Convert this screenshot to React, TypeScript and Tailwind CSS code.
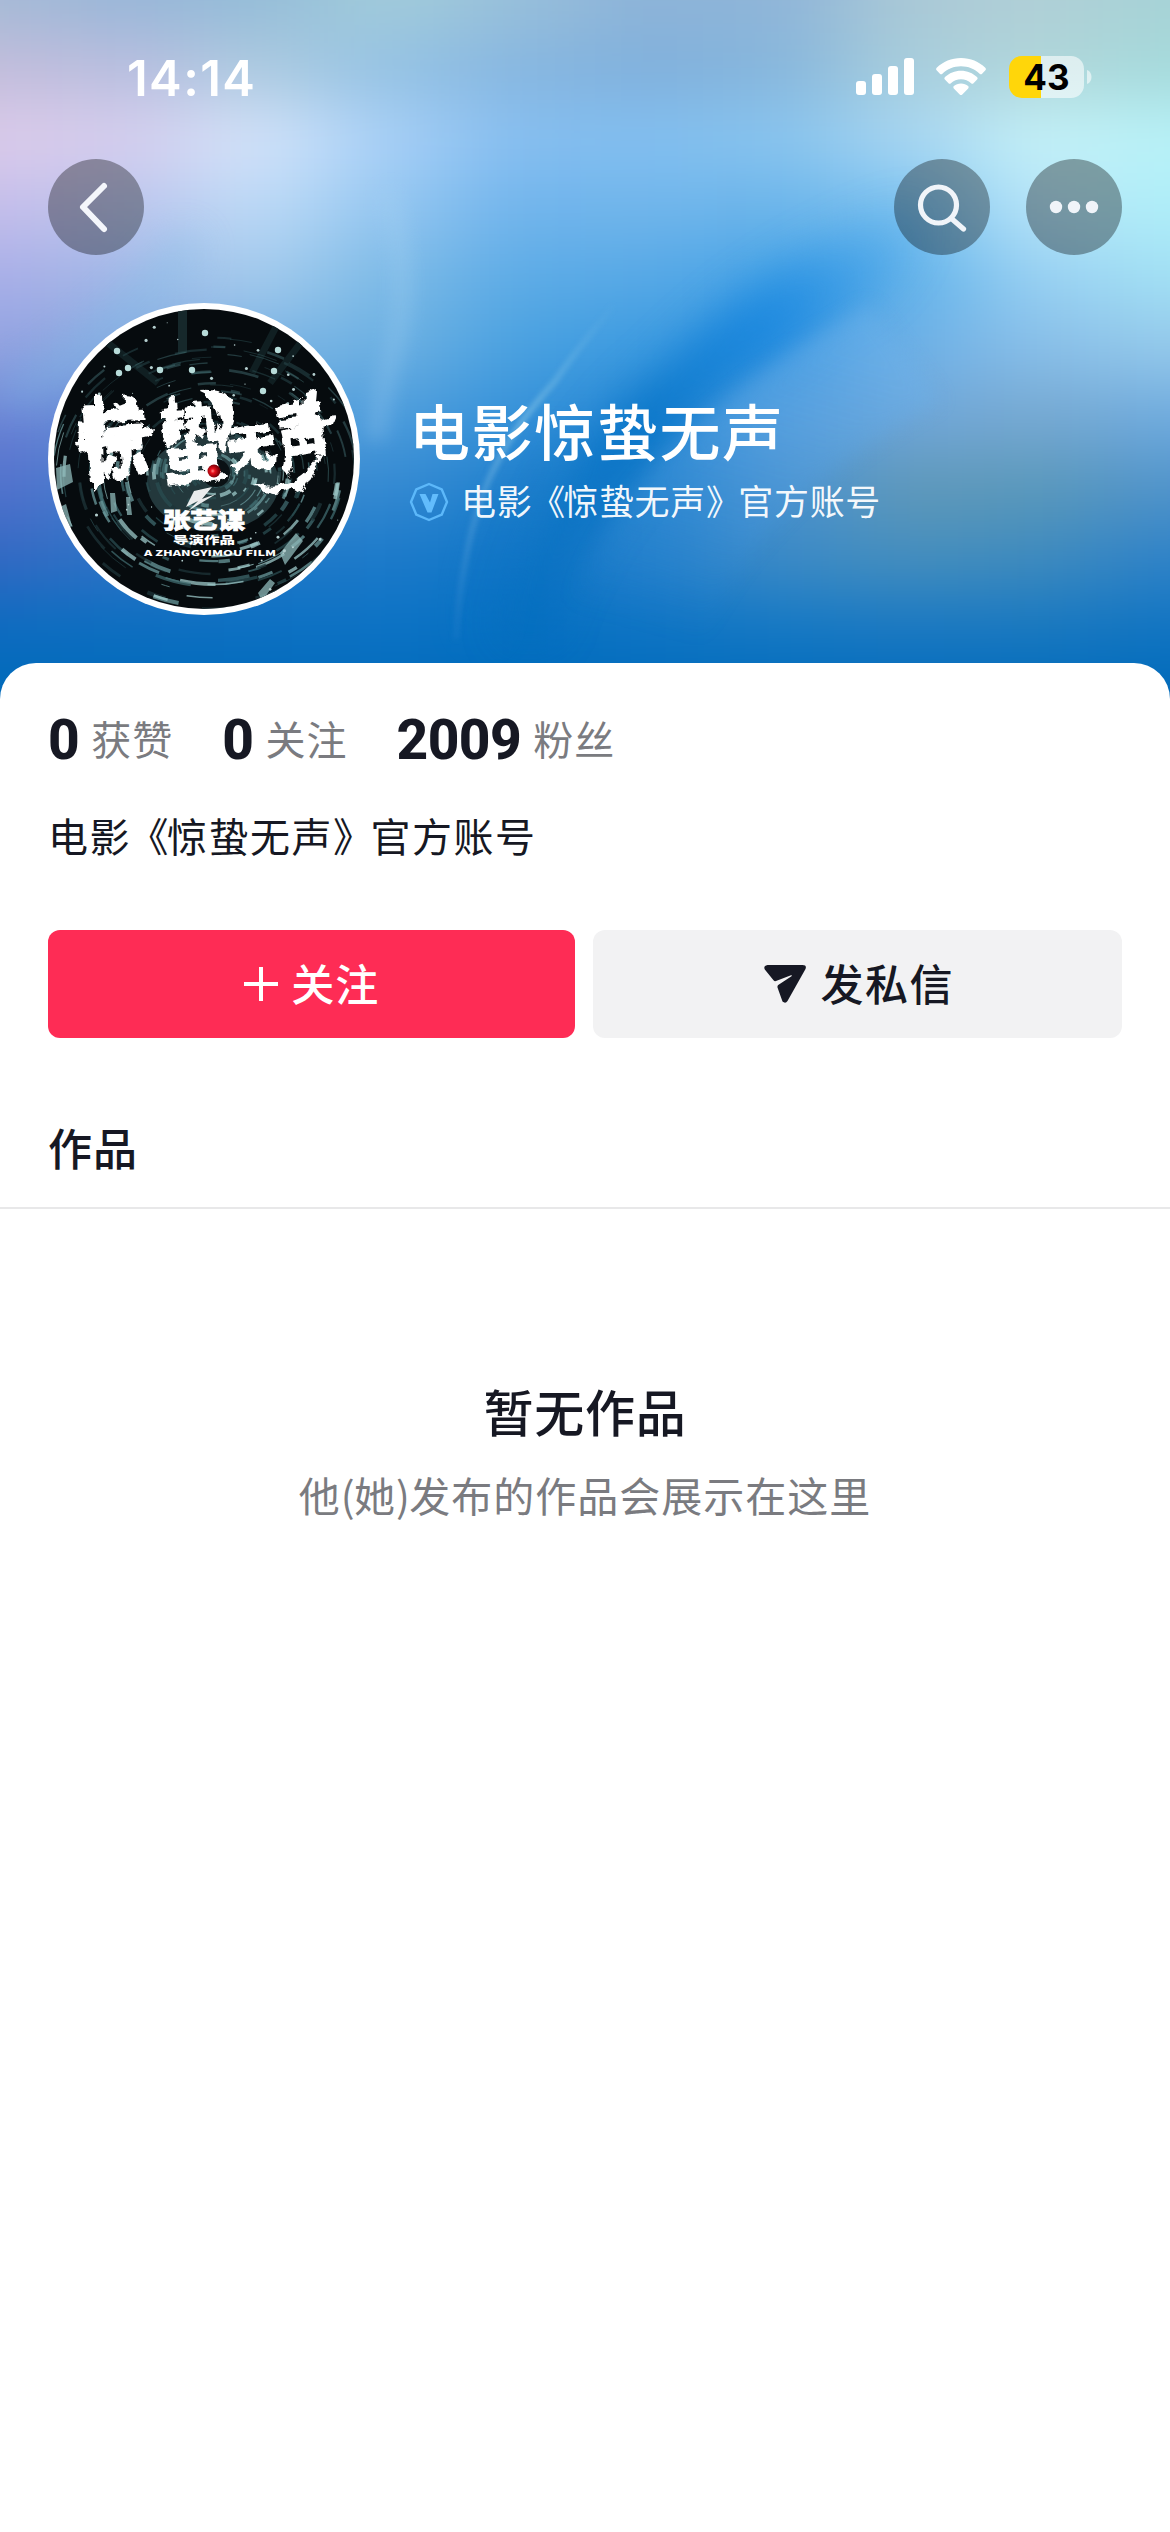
import type { ReactNode } from "react";

const SANS = "font-['Noto_Sans_CJK_SC',sans-serif]";

// cover colours, one row every 70px, one column every 130px
const COVER = [
  ["#a6bad6", "#98b6d8", "#94bcd8", "#a2ccda", "#98bfda", "#8db3d8", "#8fb5d8", "#aac8d6", "#b0cfd6", "#a6d2d6"],
  ["#c3bddb", "#b9bedf", "#adcbe0", "#94c2e4", "#86b6e0", "#80b0dc", "#86b6dc", "#a8cedc", "#b0d6da", "#a5dadb"],
  ["#dccbea", "#d6ceee", "#d4e4fa", "#a8d0f7", "#86bef0", "#82bff0", "#88c4ee", "#a8d6f2", "#c6f2f8", "#b8f2f8"],
  ["#c4bdea", "#bac6ee", "#bcdaf6", "#94c6f0", "#70b4ec", "#70b5eb", "#6ab4ea", "#7cc2f0", "#b8e4f8", "#aeeef8"],
  ["#a8aee8", "#a0b8e6", "#a2caec", "#7cbae6", "#5cabe6", "#56a8e6", "#44a2e6", "#62b2ea", "#98d0f2", "#a2e0f4"],
  ["#92a2e0", "#84a8de", "#7ab2e2", "#6cb0e2", "#48a0e0", "#3a9ae0", "#3494e0", "#6eb0e6", "#88bee8", "#94c8ea"],
  ["#6a80d4", "#6090d8", "#60a4dc", "#4c9cdc", "#3490d8", "#2486d4", "#529cdc", "#70a6d8", "#76a8d0", "#6eaade"],
  ["#5270cc", "#4080cc", "#3c8cd0", "#3489d2", "#2080cc", "#1c7fcc", "#4a92d0", "#6098b8", "#5a98ba", "#5093ca"],
  ["#3268c2", "#2c74c6", "#2078c8", "#1c7aca", "#1076c6", "#2480cc", "#3c8ac6", "#448ebe", "#3e8abe", "#2e82c8"],
  ["#0c6cc0", "#0c6ec0", "#0c70c2", "#0c72c4", "#0470c2", "#0e74c4", "#1478c4", "#1a78c2", "#1878c0", "#1074c2"],
  ["#006ab9", "#006aba", "#006aba", "#006aba", "#006aba", "#006aba", "#006aba", "#006aba", "#006aba", "#006ab9"],
];

function Cover() {
  return (
    <svg className="absolute left-0 top-0" width="1170" height="720" viewBox="0 0 1170 720">
      <defs>
        <filter id="mesh" filterUnits="userSpaceOnUse" x="-200" y="-200" width="1570" height="1120" colorInterpolationFilters="sRGB">
          <feGaussianBlur stdDeviation="50 30" />
        </filter>
        <filter id="soft" filterUnits="userSpaceOnUse" x="-200" y="-200" width="1570" height="1120" colorInterpolationFilters="sRGB">
          <feGaussianBlur stdDeviation="20" />
        </filter>
        <filter id="edge" filterUnits="userSpaceOnUse" x="-200" y="-200" width="1570" height="1120" colorInterpolationFilters="sRGB">
          <feGaussianBlur stdDeviation="9" />
        </filter>
        <filter id="thin" filterUnits="userSpaceOnUse" x="-200" y="-200" width="1570" height="1120" colorInterpolationFilters="sRGB">
          <feGaussianBlur stdDeviation="2.500" />
        </filter>
        <linearGradient id="fold" gradientUnits="userSpaceOnUse" x1="930" y1="190" x2="520" y2="640">
          <stop offset="0" stopColor="#1c8ce4" stopOpacity="0" />
          <stop offset=".18" stopColor="#1c8ce4" stopOpacity=".3" />
          <stop offset=".34" stopColor="#1484de" stopOpacity=".75" />
          <stop offset=".6" stopColor="#0070c4" stopOpacity=".75" />
          <stop offset="1" stopColor="#0068ba" stopOpacity=".3" />
        </linearGradient>
        <linearGradient id="lit" gradientUnits="userSpaceOnUse" x1="780" y1="340" x2="700" y2="640">
          <stop offset="0" stopColor="#6eb2ea" stopOpacity=".4" />
          <stop offset=".6" stopColor="#4a9ae0" stopOpacity=".28" />
          <stop offset="1" stopColor="#2080d0" stopOpacity="0" />
        </linearGradient>
        <linearGradient id="line" gradientUnits="userSpaceOnUse" x1="620" y1="300" x2="456" y2="640">
          <stop offset="0" stopColor="#7cc0e8" stopOpacity="0" />
          <stop offset=".4" stopColor="#84c4e6" stopOpacity=".6" />
          <stop offset="1" stopColor="#5c9cdc" stopOpacity=".1" />
        </linearGradient>
      </defs>
      <g filter="url(#mesh)">
        {COVER.map((row, r) =>
          row.map((color, c) => (
            <rect
              key={`${r}-${c}`}
              x={c === 0 ? -200 : c * 130 - 66}
              y={r === 0 ? -160 : r * 70 - 36}
              width={c === 0 || c === 9 ? 336 : 132}
              height={r === 0 || r === 10 ? 196 : 72}
              fill={color}
            />
          ))
        )}
      </g>
      {/* the fold, then its lit side */}
      <path d="M930 190C820 235 740 290 664 366C600 420 535 500 500 640L550 640C565 575 600 515 655 452C725 385 790 340 860 305C900 285 930 240 930 190Z" fill="url(#fold)" filter="url(#soft)" />
      <path d="M870 305C800 342 740 385 670 448C615 510 575 570 552 650L700 650C730 560 800 480 940 400Z" fill="url(#lit)" filter="url(#edge)" />
      <path d="M614 305C590 335 570 358 556 380C520 420 505 445 489 479C474 515 460 570 456 640" fill="none" stroke="url(#line)" strokeWidth="6" filter="url(#thin)" />
      <path d="M480 640C486 560 510 500 560 440" fill="none" stroke="#0870c4" strokeWidth="26" opacity=".3" filter="url(#soft)" />
      <path d="M388 190C400 240 408 290 396 340C388 370 380 400 376 440" fill="none" stroke="#a8d2f2" strokeWidth="20" opacity=".26" filter="url(#edge)" />
      <path d="M190 240C140 310 70 370 0 400" fill="none" stroke="#7cc0e8" strokeWidth="30" opacity=".4" filter="url(#soft)" />
    </svg>
  );
}

function StatusBar() {
  return (
    <div className="flex h-[159px] items-start justify-between pl-[127px] pr-[78px] pt-[56px]">
      <div className="h-[46px] font-['Inter',sans-serif] text-[49px] font-semibold leading-[45px] tracking-[1.400px] text-white">
        14:14
      </div>
      <div className="flex h-[42px] items-center">
        <svg width="58" height="38" viewBox="0 0 58 38" fill="#fff">
          <rect x="0" y="23" width="10" height="14" rx="3" />
          <rect x="16" y="16" width="10" height="21" rx="3" />
          <rect x="32" y="8" width="10" height="29" rx="3" />
          <rect x="48" y="0" width="10" height="37" rx="3" />
        </svg>
        <svg className="ml-[22px]" width="50" height="38" viewBox="0 0 50 38" fill="#fff">
          <path d="M25 0C34.500 0 43 3.700 49.300 9.700c.8.8.8 1.800.1 2.600l-3.300 3.400c-.7.7-1.700.7-2.500 0C38.700 11 32.200 8.300 25 8.300S11.300 11 6.400 15.700c-.8.7-1.800.7-2.500 0L.6 12.300c-.7-.8-.7-1.800.1-2.600C7 3.700 15.500 0 25 0z" />
          <path d="M25 12.700c6.200 0 11.800 2.400 16 6.300.8.8.8 1.800.1 2.600l-3.600 3.600c-.7.7-1.600.7-2.400 0C32.400 22.700 28.900 21.200 25 21.200s-7.400 1.500-10.100 4c-.8.7-1.700.7-2.400 0l-3.600-3.600c-.7-.8-.7-1.800.1-2.600 4.200-3.900 9.800-6.300 16-6.300z" />
          <path d="M25 25.500c2.800 0 5.300 1 7.100 2.600.7.600.7 1.600.1 2.300L26.300 36.400c-.8.8-1.800.8-2.600 0l-5.900-6c-.6-.7-.6-1.700.1-2.300 1.800-1.600 4.300-2.600 7.100-2.600z" />
        </svg>
        <div className="ml-[23px] flex h-[42px] w-[75px] items-center justify-center rounded-[13px] bg-[linear-gradient(90deg,#ffd60a_0,#ffd60a_32px,rgba(255,255,255,0.58)_32px)] font-['Inter',sans-serif] text-[35px] font-bold leading-none text-black">
          43
        </div>
        <svg className="ml-[3px]" width="5" height="14" viewBox="0 0 5 14">
          <path d="M0 0C3 1 4.500 4 4.500 7S3 13 0 14Z" fill="#fff" opacity=".58" />
        </svg>
      </div>
    </div>
  );
}

function RoundButton({ children }: { children: ReactNode }) {
  return (
    <button className="flex size-24 items-center justify-center rounded-full bg-black/34">
      {children}
    </button>
  );
}

// pseudo random in 0..1, stable between renders
const rand = (n: number) => {
  const v = Math.sin(n * 127.1 + 3.7) * 43758.5453;
  return v - Math.floor(v);
};

const ARC_COLORS = ["#9cc8c8", "#3f6a6d", "#2a4c50", "#6a9a9c", "#1e3438"];

function Avatar() {
  const arcs = Array.from({ length: 420 }, (_, i) => {
    const r = 16 + rand(i) * 150;
    const a = rand(i + 500) * Math.PI * 2;
    const span = (0.06 + rand(i + 900) * 0.22) * (r < 60 ? 2 : 1);
    const cx = 165;
    const cy = 170;
    const x1 = cx + r * Math.cos(a);
    const y1 = cy + r * Math.sin(a) * 0.85;
    const x2 = cx + r * Math.cos(a + span);
    const y2 = cy + r * Math.sin(a + span) * 0.85;
    const low = y1 > 150;
    return {
      d: `M${x1.toFixed(1)} ${y1.toFixed(1)}A${r.toFixed(1)} ${(r * 0.85).toFixed(1)} 0 0 1 ${x2.toFixed(1)} ${y2.toFixed(1)}`,
      color: low ? ARC_COLORS[i % 5] : ARC_COLORS[(i % 2) + 1],
      width: 0.6 + rand(i + 70) * (low ? 3.6 : 2.2),
      opacity: low ? 0.75 : 0.5,
    };
  });

  return (
    <svg className="shrink-0" width="312" height="312" viewBox="0 0 312 312">
      <defs>
        <clipPath id="face">
          <circle cx="156" cy="156" r="150" />
        </clipPath>
        <filter id="brush" x="-10%" y="-10%" width="120%" height="120%">
          <feTurbulence type="fractalNoise" baseFrequency="0.07" numOctaves="4" seed="4" result="n" />
          <feDisplacementMap in="SourceGraphic" in2="n" scale="10" xChannelSelector="R" yChannelSelector="G" />
        </filter>
        <radialGradient id="eye" cx=".4" cy=".5">
          <stop offset="0" stopColor="#ff8c88" />
          <stop offset=".35" stopColor="#e8101c" />
          <stop offset="1" stopColor="#7c0008" />
        </radialGradient>
      </defs>
      <circle cx="156" cy="156" r="156" fill="#fff" />
      <g clipPath="url(#face)">
        <rect width="312" height="312" fill="#060b0e" />
        <rect x="130" y="0" width="9" height="50" fill="#16282b" />
        <path d="M230 20L204 70M260 30L222 80M60 40L110 80" stroke="#101f22" strokeWidth="7" />
        <ellipse cx="165" cy="180" rx="66" ry="48" fill="#40666a" opacity=".5" />
        {arcs.map((arc, i) => (
          <path key={i} d={arc.d} fill="none" stroke={arc.color} strokeWidth={arc.width} opacity={arc.opacity} />
        ))}
        <path d="M8 165l14-4 3 18-16 8zM10 205l8-4 6 22-10 6zM232 250l16-20 7 8-18 24zM210 290l12-14 5 4-13 18zM62 190l5 0 2 18-6 2zM78 194l4 0 2 18-5 0z" fill="#8fb9ba" opacity=".75" />
        <circle cx="168" cy="170" r="14" fill="#0a1114" />
        {Array.from({ length: 75 }, (_, i) => (
          <circle
            key={i}
            cx={rand(i + 41) * 312}
            cy={rand(i + 83) < 0.6 ? rand(i + 7) * 110 : 200 + rand(i + 7) * 110}
            r={0.5 + rand(i + 19) * 1.2}
            fill="#b4cece"
          />
        ))}
        {[[157, 30], [80, 65], [69, 48], [71, 70], [112, 67], [230, 47], [226, 68], [215, 88], [144, 67]].map(([x, y]) => (
          <circle key={x} cx={x} cy={y} r="3.200" fill="#b8dcda" />
        ))}
        <g filter="url(#brush)" fill="#fff" className="font-['Noto_Sans_CJK_SC',sans-serif] font-black">
          <text transform="translate(31 172) rotate(-4) scale(.94 1.060)" fontSize="76">惊</text>
          <text transform="translate(114 176) rotate(-5) scale(.86 1.160)" fontSize="76">蛰</text>
          <text transform="translate(184 166) rotate(-8) scale(1 1.100)" fontSize="46" stroke="#fff" strokeWidth="2">无</text>
          <text transform="translate(233 166) rotate(-8) scale(.78 1.200)" fontSize="66">声</text>
          <path d="M46 92L54 90L56 178L46 188ZM76 92Q90 88 92 108L86 118Q74 108 76 92ZM28 140L106 124L104 132L30 150ZM122 94L127 90L126 132L116 136ZM150 88Q188 86 186 110L178 150L170 142Q180 100 150 88ZM256 92L268 88L264 132L254 130ZM234 128L288 112L284 122L236 136ZM206 180Q240 194 270 156L276 150L254 190L244 184Q222 198 206 180Z" />
        </g>
        <path d="M146 188L164 184L154 196L168 191L140 208L150 198L138 204Z" fill="#fff" opacity=".9" />
        <circle cx="166" cy="168" r="6.500" fill="url(#eye)" />
        <g fill="#fff" textAnchor="middle" className="font-['Noto_Sans_CJK_SC',sans-serif] font-black">
          <text x="156" y="225" fontSize="22" textLength="82" lengthAdjust="spacingAndGlyphs" stroke="#fff" strokeWidth=".8">张艺谋</text>
          <text x="156" y="241" fontSize="10.500" textLength="62" lengthAdjust="spacingAndGlyphs">导演作品</text>
          <text x="162" y="252.500" fontSize="8" textLength="132" lengthAdjust="spacingAndGlyphs">A ZHANGYIMOU FILM</text>
        </g>
      </g>
    </svg>
  );
}

function VerifiedBadge() {
  return (
    <svg width="40" height="40" viewBox="0 0 40 40" fill="none">
      <path d="M20 2 L32.700 7.300 L38 20 L32.700 32.700 L20 38 L7.300 32.700 L2 20 L7.300 7.300 Z" stroke="#5cb8fa" strokeWidth="2.400" strokeLinejoin="round" />
      <path d="M10.500 12H16.500L21 20.500L23.500 12H29.500L22.500 30.500H18.500Z" fill="#62bcfc" />
    </svg>
  );
}

// title marks sit tighter than the glyphs around them
function OfficialName() {
  return (
    <>
      电影<span className="-ml-[0.06em] -mr-[0.08em]">《</span>惊蛰无声<span className="-mr-[0.1em]">》</span>官方账号
    </>
  );
}

function Stat({ value, label }: { value: string; label: string }) {
  return (
    <div className="flex h-[56px] items-center">
      <span className="font-['Roboto',sans-serif] text-[55px] font-extrabold leading-[56px] tracking-[-0.5px] text-[#161823]">{value}</span>
      <span className="-mt-[5px] ml-[12px] text-[40px] leading-[56px] tracking-[1px] text-[#7a7b80]">{label}</span>
    </div>
  );
}

export default function App() {
  return (
    <div className={`relative h-[2532px] w-[1170px] overflow-hidden bg-white ${SANS}`}>
      <Cover />

      <header className="relative h-[663px]">
        <StatusBar />

        <nav className="flex justify-between px-12">
          <RoundButton>
            <svg width="96" height="96" viewBox="0 0 96 96" fill="none" stroke="#f4f6fb" strokeWidth="6" strokeLinecap="round" strokeLinejoin="round">
              <path d="M56 27L35 48L56 70" />
            </svg>
          </RoundButton>
          <div className="flex gap-9">
            <RoundButton>
              <svg width="96" height="96" viewBox="0 0 96 96" fill="none" stroke="#f0f4f9" strokeWidth="5.200" strokeLinecap="round">
                <circle cx="44.500" cy="46" r="18" />
                <path d="M58 60L69.500 70" />
              </svg>
            </RoundButton>
            <RoundButton>
              <svg width="96" height="96" viewBox="0 0 96 96" fill="#f0f4f9">
                <circle cx="30" cy="48" r="6.200" />
                <circle cx="48" cy="48" r="6.200" />
                <circle cx="66" cy="48" r="6.200" />
              </svg>
            </RoundButton>
          </div>
        </nav>

        <div className="mt-12 flex px-12">
          <Avatar />
          <div className="ml-[49px] pt-[91px]">
            <h1 className="text-[61px] font-medium leading-[72px] tracking-[1.600px] text-white">电影惊蛰无声</h1>
            <div className="mt-[14px] flex h-[44px] items-center">
              <VerifiedBadge />
              <span className="-mt-[4px] ml-[12px] text-[35px] leading-[44px] tracking-[0.700px] text-white/95">
                <OfficialName />
              </span>
            </div>
          </div>
        </div>
      </header>

      <main className="relative h-[1869px] rounded-t-[36px] bg-white pt-[49px]">
        <div className="flex gap-[49px] px-12">
          <Stat value="0" label="获赞" />
          <Stat value="0" label="关注" />
          <Stat value="2009" label="粉丝" />
        </div>

        <p className="mt-[39px] px-12 text-[40px] leading-[56px] tracking-[1.500px] text-[#161823]">
          <OfficialName />
        </p>

        <div className="mt-[67px] flex gap-[18px] px-12">
          <button className="flex h-[108px] flex-1 items-center justify-center rounded-[12px] bg-[#fe2c55] text-white">
            <svg width="36" height="36" viewBox="0 0 36 36" stroke="#fff" strokeWidth="4">
              <path d="M18 1V35M1 18H35" />
            </svg>
            <span className="-mt-[4px] ml-[12px] text-[43px] font-medium tracking-[1px]">关注</span>
          </button>
          <button className="flex h-[108px] flex-1 items-center justify-center rounded-[12px] bg-[#f2f2f3] pl-[3px] text-[#161823]">
            <svg width="42" height="38" viewBox="0 0 42 38" fill="#161823">
              <path d="M3.500 0H38.500Q43 0 41.500 4L23.500 36Q21.500 39 18.500 36.500L13.500 22.500Q13.200 21 14.200 20L27.500 11.300Q28.500 10 27 10.300L12 16Q10.500 16.500 9.500 15.300L.8 4.500Q-1 1 3.500 0Z" />
            </svg>
            <span className="-mt-[4px] ml-[15px] text-[43px] font-medium tracking-[1.500px]">发私信</span>
          </button>
        </div>

        <div className="mt-[57px] flex h-[114px] items-center border-b-2 border-[#e8e8e9] px-12">
          <h2 className="-mt-[8px] text-[44px] font-medium leading-[60px] tracking-[1px] text-[#161823]">作品</h2>
        </div>

        <section className="flex flex-col items-center pt-[165px]">
          <h3 className="text-[50px] font-medium leading-[72px] tracking-[0.700px] text-[#161823]">暂无作品</h3>
          <p className="mt-[20px] text-[41px] leading-[56px] tracking-[1px] text-[#7a7b80]">
            他<span className="tracking-[-0.500px]">(</span>她<span className="tracking-[-0.500px]">)</span>发布的作品会展示在这里
          </p>
        </section>
      </main>
    </div>
  );
}
